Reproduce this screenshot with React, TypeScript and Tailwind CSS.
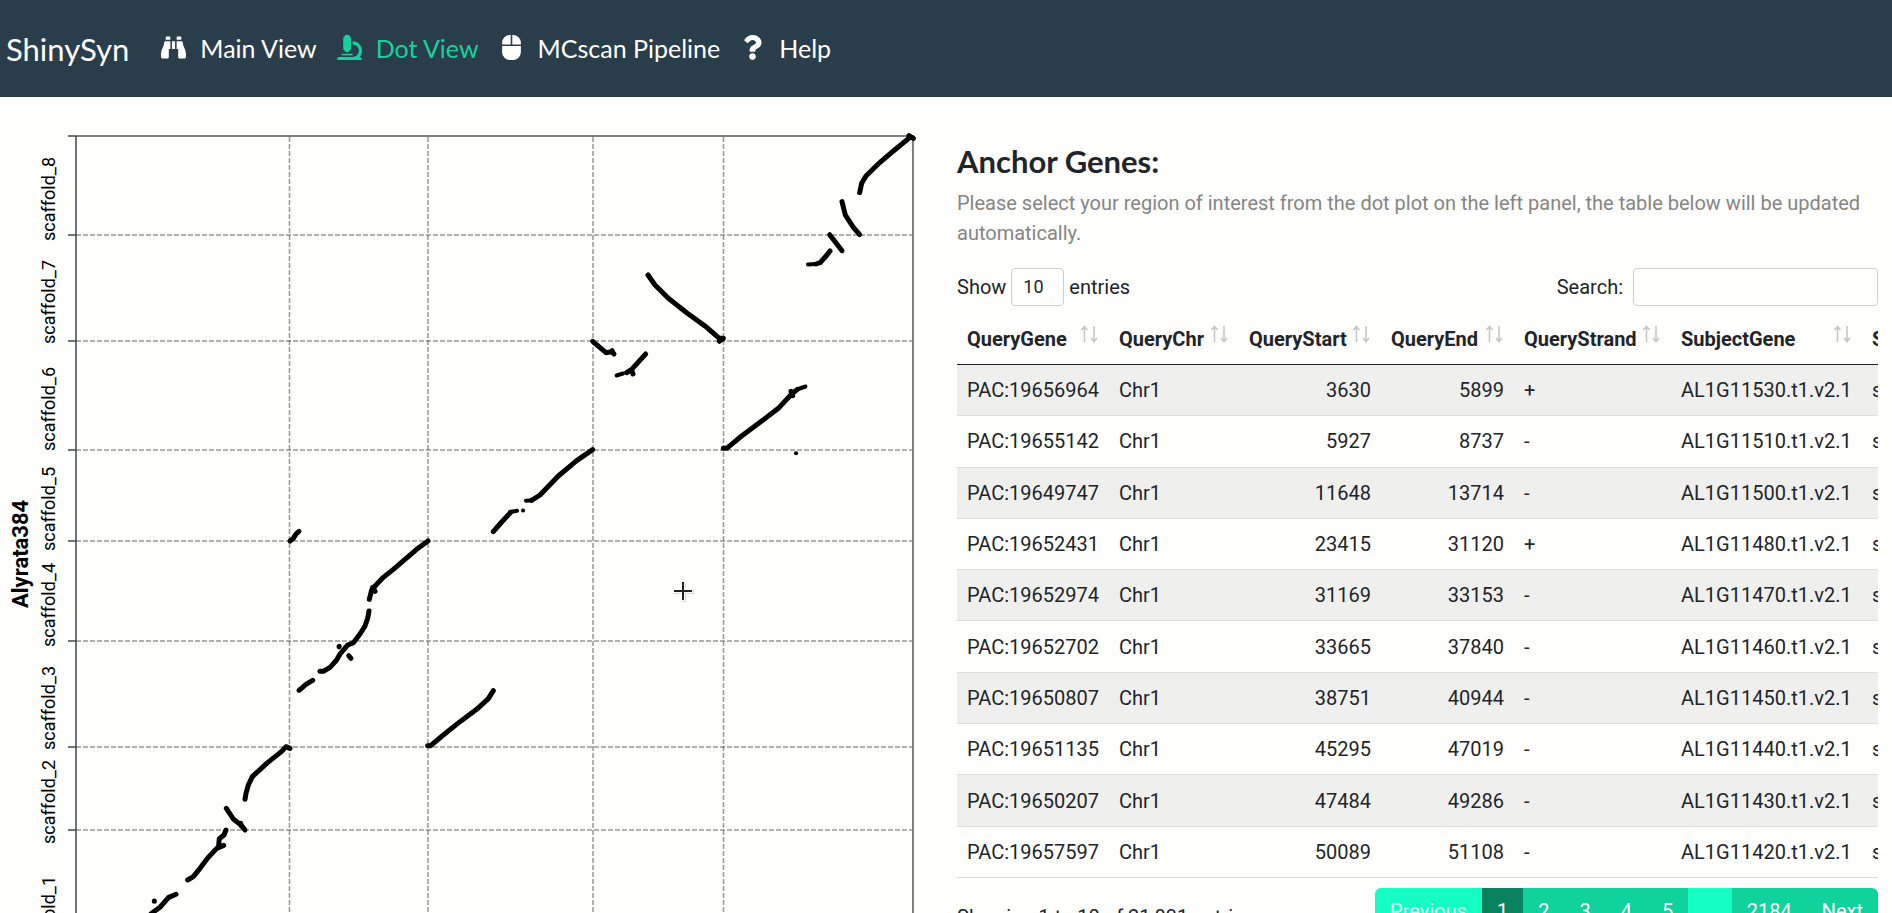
import React from "react";
import { FaBinoculars, FaMicroscope, FaMouse, FaQuestion } from "react-icons/fa";

const navItems = [
  { label: "Main View", icon: FaBinoculars, active: false },
  { label: "Dot View", icon: FaMicroscope, active: true },
  { label: "MCscan Pipeline", icon: FaMouse, active: false },
  { label: "Help", icon: FaQuestion, active: false },
];

const columns = [
  { name: "QueryGene", width: "w-[152px]" },
  { name: "QueryChr", width: "w-[130px]" },
  { name: "QueryStart", width: "w-[142px]" },
  { name: "QueryEnd", width: "w-[133px]" },
  { name: "QueryStrand", width: "w-[157px]" },
  { name: "SubjectGene", width: "w-[191px]" },
  { name: "SubjectChr", width: "w-[150px]" },
];

const rows = [
  ["PAC:19656964", 3630, 5899, "+", "AL1G11530.t1.v2.1"],
  ["PAC:19655142", 5927, 8737, "-", "AL1G11510.t1.v2.1"],
  ["PAC:19649747", 11648, 13714, "-", "AL1G11500.t1.v2.1"],
  ["PAC:19652431", 23415, 31120, "+", "AL1G11480.t1.v2.1"],
  ["PAC:19652974", 31169, 33153, "-", "AL1G11470.t1.v2.1"],
  ["PAC:19652702", 33665, 37840, "-", "AL1G11460.t1.v2.1"],
  ["PAC:19650807", 38751, 40944, "-", "AL1G11450.t1.v2.1"],
  ["PAC:19651135", 45295, 47019, "-", "AL1G11440.t1.v2.1"],
  ["PAC:19650207", 47484, 49286, "-", "AL1G11430.t1.v2.1"],
  ["PAC:19657597", 50089, 51108, "-", "AL1G11420.t1.v2.1"],
];

const pages = [
  { label: "Previous", tone: "bg-[#14fec4] text-[#d5fff3]" },
  { label: "1", tone: "bg-[#09835f] text-white" },
  { label: "2", tone: "bg-[#10d29b] text-white" },
  { label: "3", tone: "bg-[#10d29b] text-white" },
  { label: "4", tone: "bg-[#10d29b] text-white" },
  { label: "5", tone: "bg-[#10d29b] text-white" },
  { label: "…", tone: "bg-[#14fec4] text-[#d5fff3]" },
  { label: "2184", tone: "bg-[#10d29b] text-white" },
  { label: "Next", tone: "bg-[#10d29b] text-white" },
];

const scaffolds = [
  { label: "scaffold_8", line: 235, text: 241 },
  { label: "scaffold_7", line: 341, text: 344 },
  { label: "scaffold_6", line: 450, text: 451 },
  { label: "scaffold_5", line: 541, text: 551 },
  { label: "scaffold_4", line: 641, text: 647 },
  { label: "scaffold_3", line: 747, text: 750 },
  { label: "scaffold_2", line: 830, text: 844 },
  { label: "scaffold_1", line: 1005, text: 960 },
];

// Syntenic blocks, in thirds of a plot unit, grouped by origin.
const blocks = [
  {
    origin: "translate(0 500) scale(0.33333)",
    paths: [
      "870,123 880,115 888,102 897,94",
      "1284,123 1250,148 1215,178 1180,208 1150,232 1128,255 1115,270 1108,298",
      "1118,262 1125,274",
      "1107,333 1103,355 1095,378 1080,402 1060,428 1042,436 1020,462 1010,480 990,502 970,514 960,514",
      "1017,440 1018,439",
      "1046,467 1053,475",
      "938,541 918,553 897,571",
      "870,745 858,740 845,754 800,790 757,830 745,855 738,880 735,898",
      "679,925 700,957 725,977 735,990",
      "722,970 724,978",
      "678,990 672,1005 658,1016 656,1035",
      "671,1036 650,1045 625,1072 600,1105 580,1130 563,1140",
      "528,1183 505,1193 480,1222 455,1240 420,1272 380,1300 340,1340 300,1390 260,1440 230,1512",
      "463,1203 463,1204",
    ],
  },
  {
    origin: "translate(560 120) scale(0.33333)",
    paths: [
      "1060,55 1047,47",
      "1050,52 1000,93 960,127 918,168 905,190 899,218",
      "846,245 856,285 880,322 899,344",
      "809,344 826,366 846,392",
      "810,393 795,412 780,428 768,432",
      "264,465 285,495 325,535 380,578 440,622 478,655 490,655",
      "478,664 486,658",
      "98,664 138,698 155,695 162,702",
      "156,692 158,696",
      "257,702 215,748 200,758",
      "216,754 219,762",
      "712,808 695,822 655,865 600,907 545,948 500,985 490,985",
      "693,814 698,827",
    ],
  },
  {
    origin: "translate(280 440) scale(0.33333)",
    paths: [
      "938,29 890,62 835,108 780,165 755,181",
      "640,275 665,246 692,217",
      "640,752 625,776 590,808 540,845 490,885 452,917 443,917",
    ],
  },
];

const thinBlocks = [
  "M808 264.5 L816 264",
  "M616.5 375.5 L623 373.5",
  "M797 389.5 L805.5 386.5",
  "M526 500.7 L532 500.3",
  "M510 512 L517 510.7",
  "M523 510.5 L523.1 510.5",
  "M796 453.3 L796.1 453.3",
];

function DotPlot() {
  return (
    <svg viewBox="0 97 946 960" className="block w-full" role="img" aria-label="Alyrata384">
      <g stroke="#333" strokeOpacity="0.5" strokeWidth="1.5" strokeDasharray="5 2">
        {scaffolds.slice(0, 7).map((s) => (
          <line key={s.label} x1="76" x2="913" y1={s.line} y2={s.line} />
        ))}
        {[289.5, 428, 593, 723.5].map((x) => (
          <line key={x} x1={x} x2={x} y1="137" y2="1005" />
        ))}
      </g>
      <path d="M76 136 H913 V1005" fill="none" stroke="#80807e" strokeWidth="2" />
      <path d="M76 136 V1005 H913" fill="none" stroke="#42464b" strokeWidth="1.5" />
      <g stroke="#42464b" strokeWidth="1.5">
        <line x1="68" x2="76" y1="136" y2="136" />
        {scaffolds.map((s) => (
          <line key={s.label} x1="68" x2="76" y1={s.line} y2={s.line} />
        ))}
      </g>
      <g fill="none" stroke="#000" strokeLinecap="round" strokeLinejoin="round">
        {blocks.map((b) => (
          <g key={b.origin} transform={b.origin} strokeWidth="15">
            {b.paths.map((p) => (
              <polyline key={p} points={p} />
            ))}
          </g>
        ))}
        {thinBlocks.map((d) => (
          <path key={d} d={d} strokeWidth="4" />
        ))}
      </g>
      <g className="text-[18px]" fill="#000">
        {scaffolds.map((s) => (
          <text key={s.label} transform={`translate(55 ${s.text}) rotate(-90)`}>
            {s.label}
          </text>
        ))}
      </g>
      <text className="text-[22px] font-bold" transform="translate(28 608) rotate(-90)">
        Alyrata384
      </text>
      <path d="M673 592 H694 M684 583 V602" stroke="#d8d8d8" strokeWidth="4" />
      <path d="M673 591 H693 M683 581 V601" stroke="#fff" strokeWidth="4" />
      <path d="M674 591 H692 M683 582 V600" stroke="#222" strokeWidth="2" />
    </svg>
  );
}

function SortArrows() {
  return (
    <svg viewBox="0 0 18 18" className="mr-px mb-[10px] h-[18px] w-[18px] shrink-0" fill="none" stroke="#c4c5c6" strokeWidth="1.5">
      <path d="M4.5 17 V1.5 M1.5 5 L4.5 1.5 L7.5 5 M14 1 V16.5 M11 13 L14 16.5 L17 13" />
    </svg>
  );
}

export default function App() {
  return (
    <div className="h-screen overflow-x-hidden overflow-y-auto bg-[#fefefd] font-['Roboto',sans-serif] text-xl leading-[30px] text-[#212529] [scrollbar-width:none]">
      <nav className="flex h-[97px] items-center bg-[#293d4b] pl-[6px] font-['Lato',sans-serif] text-white">
        <a href="#home" className="mr-8 text-[31px] leading-10">
          ShinySyn
        </a>
        <ul className="flex items-center gap-5 pb-[2px]">
          {navItems.map(({ label, icon: Icon, active }) => (
            <li key={label}>
              <a
                href="#view"
                className={
                  active
                    ? "flex items-center gap-[14px] text-[25px] text-[#12d39d]"
                    : "flex items-center gap-[14px] text-[25px] text-white"
                }
              >
                <Icon className="h-[25px] w-auto" />
                {label}
              </a>
            </li>
          ))}
        </ul>
      </nav>

      <main className="grid grid-cols-2">
        <section>
          <DotPlot />
        </section>

        <section className="min-w-0 pt-[46px] pr-[14px] pb-10 pl-[11px]">
          <h4 className="mb-[9px] font-['Lato',sans-serif] text-[31px] leading-9 font-bold">Anchor Genes:</h4>
          <p className="text-[#858585]">
            Please select your region of interest from the dot plot on the left panel, the table below will be updated
            automatically.
          </p>

          <div className="mt-5 flex items-center justify-between">
            <label className="flex items-center gap-[5px]">
              Show
              <select className="h-[38px] w-[53px] appearance-none rounded border border-[#ced0d2] bg-transparent pl-[11px] text-lg">
                <option>10</option>
              </select>
              entries
            </label>
            <label className="flex items-center gap-[10px]">
              Search:
              <input type="search" className="h-[38px] w-[245px] rounded border border-[#ced0d2] bg-transparent px-3 text-lg" />
            </label>
          </div>

          <div className="mt-2 overflow-hidden">
            <table className="h-[564px] w-[1055px] table-fixed border-collapse">
              <thead>
                <tr className="border-b border-[#212529]">
                  {columns.map((c) => (
                    <th key={c.name} className={`${c.width} px-[10px] py-[10px] text-left font-bold`}>
                      <div className="flex items-center justify-between">
                        {c.name}
                        <SortArrows />
                      </div>
                    </th>
                  ))}
                </tr>
              </thead>
              <tbody>
                {rows.map((r) => (
                  <tr key={r[0]} className="border-b border-[#dcdddd] odd:bg-[#efefee]">
                    <td className="px-[10px] py-[10px]">{r[0]}</td>
                    <td className="px-[10px] py-[10px]">Chr1</td>
                    <td className="px-[10px] py-[10px] text-right">{r[1]}</td>
                    <td className="px-[10px] py-[10px] text-right">{r[2]}</td>
                    <td className="px-[10px] py-[10px]">{r[3]}</td>
                    <td className="px-[10px] py-[10px]">{r[4]}</td>
                    <td className="px-[10px] py-[10px]">scaffold_1</td>
                  </tr>
                ))}
              </tbody>
            </table>
          </div>

          <div className="mt-[10px] flex items-start justify-between">
            <p className="pt-[14px]">Showing 1 to 10 of 21,831 entries</p>
            <ul className="flex overflow-hidden rounded-md">
              {pages.map((p) => (
                <li key={p.label}>
                  <button type="button" className={`h-[46px] px-[15px] ${p.tone}`}>
                    {p.label}
                  </button>
                </li>
              ))}
            </ul>
          </div>
        </section>
      </main>
    </div>
  );
}
